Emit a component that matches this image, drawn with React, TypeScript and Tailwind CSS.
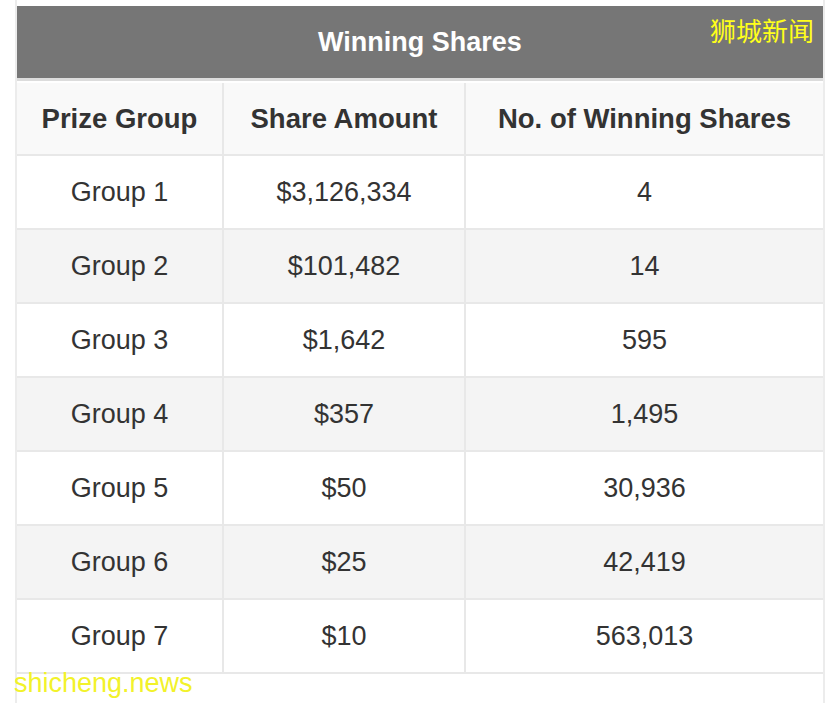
import React from "react";

const rows = [
  ["Group 1", "$3,126,334", "4"],
  ["Group 2", "$101,482", "14"],
  ["Group 3", "$1,642", "595"],
  ["Group 4", "$357", "1,495"],
  ["Group 5", "$50", "30,936"],
  ["Group 6", "$25", "42,419"],
  ["Group 7", "$10", "563,013"],
];

export default function App() {
  return (
    <div
      className="relative w-[830px] h-[703px] overflow-hidden bg-white"
      style={{ fontFamily: '"Liberation Sans", Arial, sans-serif' }}
    >
      <div className="ml-[15px] w-[810px] h-full border-l-2 border-r-2 border-[#ececec] flex flex-col">
        <div className="h-[6px] bg-white" />
        <div className="h-[72px] bg-[#767676] flex items-center justify-center text-white font-bold text-[27px]">
          Winning Shares
        </div>
        <div className="h-[3px] bg-[#dcdcdc]" />
        <div className="h-[2px] bg-white" />
        <div className="grid grid-cols-[207px_242px_1fr] text-[#333333]">
          {["Prize Group", "Share Amount", "No. of Winning Shares"].map((h, i) => (
            <div
              key={h}
              className={`h-[73px] bg-[#f9f9f9] flex items-center justify-center font-bold text-[27.5px] border-b-2 border-[#e8e8e8] ${
                i < 2 ? "border-r-2" : ""
              }`}
            >
              {h}
            </div>
          ))}
          {rows.map((r, ri) =>
            r.map((c, ci) => (
              <div
                key={ri + "-" + ci}
                className={`h-[74px] flex items-center justify-center text-[27px] border-b-2 border-[#e8e8e8] ${
                  ri % 2 === 1 ? "bg-[#f4f4f4]" : "bg-white"
                } ${ci < 2 ? "border-r-2" : ""}`}
              >
                {c}
              </div>
            ))
          )}
        </div>
        <div className="flex-1 bg-white" />
      </div>
      <div
        className="absolute left-[710px] top-[17px] text-[26px] leading-none text-[#ffff1a]"
        style={{ fontFamily: '"Noto Sans CJK SC", sans-serif' }}
      >
        狮城新闻
      </div>
      <div
        className="absolute left-[14px] top-[670px] text-[27px] leading-none text-[#f2f22a]"
        style={{ fontFamily: '"Liberation Sans", Arial, sans-serif' }}
      >
        shicheng.news
      </div>
    </div>
  );
}
